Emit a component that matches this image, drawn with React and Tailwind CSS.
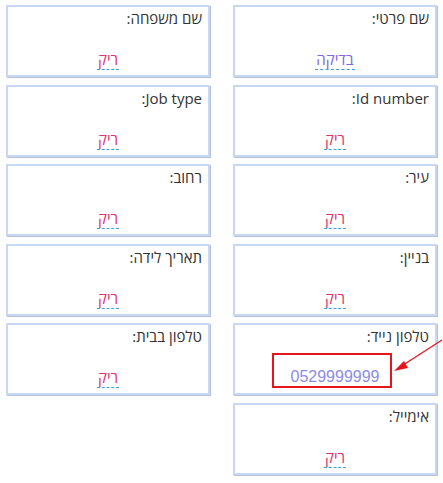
const fields = [
  { label: 'שם פרטי:', value: 'בדיקה', kind: 'filled' },
  { label: 'שם משפחה:', value: 'ריק', kind: 'empty' },
  { label: 'Id number:', value: 'ריק', kind: 'empty' },
  { label: 'Job type:', value: 'ריק', kind: 'empty' },
  { label: 'עיר:', value: 'ריק', kind: 'empty' },
  { label: 'רחוב:', value: 'ריק', kind: 'empty' },
  { label: 'בניין:', value: 'ריק', kind: 'empty' },
  { label: 'תאריך לידה:', value: 'ריק', kind: 'empty' },
  { label: 'טלפון נייד:', value: '0529999999', kind: 'phone' },
  { label: 'טלפון בבית:', value: 'ריק', kind: 'empty' },
  { label: 'אימייל:', value: 'ריק', kind: 'empty' },
];

const valueColor = {
  filled: 'text-[15px] text-[#8066e0]',
  empty: 'text-[15px] text-[#e0336f]',
  phone: "text-[16px] text-[#8c8ce6] font-['Liberation_Sans',sans-serif]",
};

function FieldCard({ label, value, kind }) {
  return (
    <div className="relative h-[72px] border-2 border-[#c6d8f5] bg-white shadow-[1px_1px_0_#b7c2d4]">
      <div className="pr-[6px] pt-[1px] text-[15px] leading-[20px] text-[#333]">{label}</div>
      <div className="absolute inset-x-0 top-[42px] flex justify-center">
        <span
          className={`border-b border-dashed border-[#3d9de2] px-[1px] leading-[20px] ${valueColor[kind]}`}
        >
          {value}
        </span>
      </div>
      {kind === 'phone' && (
        <div className="absolute left-[37px] top-[28px] h-[35px] w-[120px] border-2 border-[#e8141b]" />
      )}
    </div>
  );
}

export default function App() {
  return (
    <div
      dir="rtl"
      className="relative h-[483px] w-[443px] bg-white font-['Open_Sans','Liberation_Sans',sans-serif]"
    >
      <div className="grid grid-cols-2 gap-x-[23px] gap-y-[7.5px] px-[6px] pt-[5px]">
        {fields.map((f) => (
          <FieldCard key={f.label} {...f} />
        ))}
      </div>
      <svg
        className="pointer-events-none absolute left-0 top-0"
        width="443"
        height="483"
        viewBox="0 0 443 483"
      >
        <line x1="442" y1="340" x2="400" y2="367" stroke="#e8141b" strokeWidth="1.3" />
        <polygon points="394,371 404,361 408,368" fill="#e8141b" />
      </svg>
    </div>
  );
}
